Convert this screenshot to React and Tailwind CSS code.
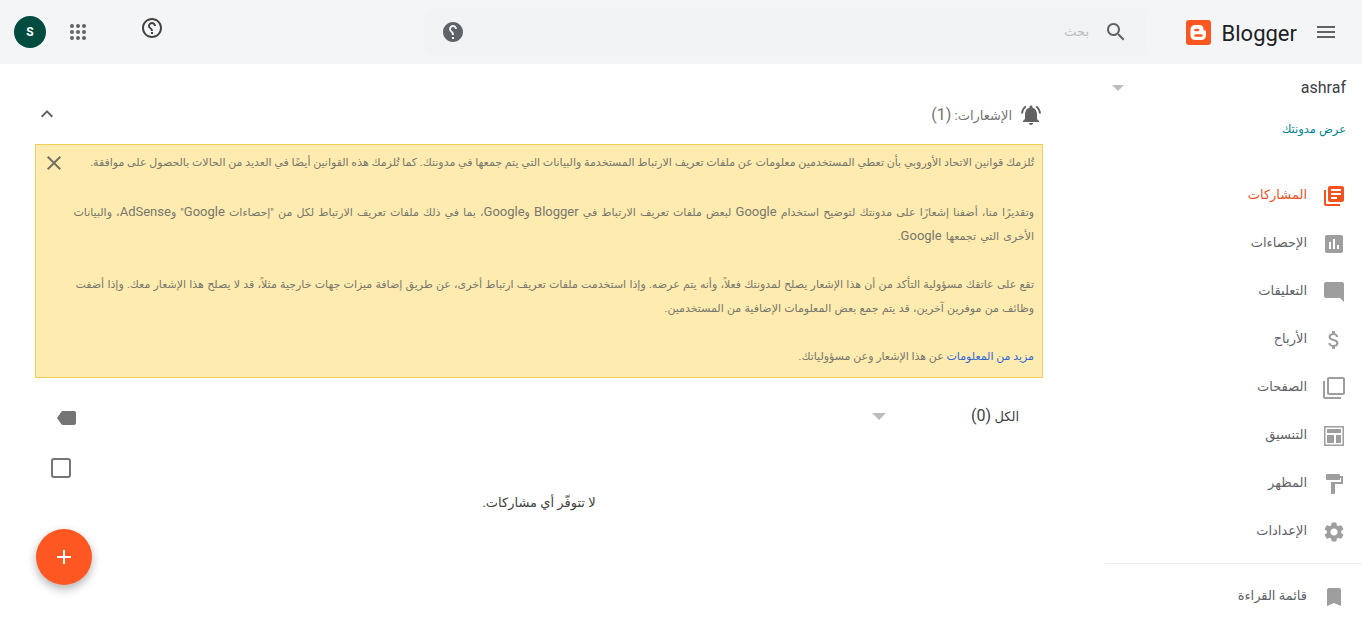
import React from 'react';

const MaterialIcon = ({ d, className = '' }) => (
  <svg viewBox="0 0 24 24" className={className} fill="currentColor">
    <path d={d} />
  </svg>
);

const icons = {
  posts: 'M4 6H2v14c0 1.1.9 2 2 2h14v-2H4V6zm16-4H8c-1.1 0-2 .9-2 2v12c0 1.1.9 2 2 2h12c1.1 0 2-.9 2-2V4c0-1.1-.9-2-2-2zm-1 9H9V9h10v2zm-4 4H9v-2h6v2zm4-8H9V5h10v2z',
  stats: 'M19 3H5c-1.1 0-2 .9-2 2v14c0 1.1.9 2 2 2h14c1.1 0 2-.9 2-2V5c0-1.1-.9-2-2-2zM9 17H7v-7h2v7zm4 0h-2V7h2v10zm4 0h-2v-4h2v4z',
  comments: 'M21.99 4c0-1.1-.89-2-1.99-2H4c-1.1 0-2 .9-2 2v12c0 1.1.9 2 2 2h14l4 4-.01-18z',
  earnings: 'M11.8 10.9c-2.27-.59-3-1.2-3-2.15 0-1.09 1.01-1.85 2.7-1.85 1.78 0 2.44.85 2.5 2.1h2.21c-.07-1.72-1.12-3.3-3.21-3.81V3h-3v2.16c-1.94.42-3.5 1.68-3.5 3.61 0 2.31 1.91 3.46 4.7 4.13 2.5.6 3 1.48 3 2.41 0 .69-.49 1.79-2.7 1.79-2.06 0-2.87-.92-2.98-2.1h-2.2c.12 2.19 1.76 3.42 3.68 3.83V21h3v-2.15c1.95-.37 3.5-1.5 3.5-3.55 0-2.84-2.43-3.81-4.7-4.4z',
  pages: 'M3 5H1v16c0 1.1.9 2 2 2h16v-2H3V5zm18-4H7c-1.1 0-2 .9-2 2v14c0 1.1.9 2 2 2h14c1.1 0 2-.9 2-2V3c0-1.1-.9-2-2-2zm0 16H7V3h14v14z',
  layout: 'M2 2v20h20V2H2zm18.500 18.500h-17v-17h17v17zM5 5h14v4H5V5zm0 6h7v8H5v-8zm9 0h5v8h-5v-8z',
  theme: 'M18 4V3c0-.55-.45-1-1-1H5c-.55 0-1 .45-1 1v4c0 .55.45 1 1 1h12c.55 0 1-.45 1-1V6h1v4H9v11c0 .55.45 1 1 1h2c.55 0 1-.45 1-1v-9h8V4h-3z',
  settings: 'M19.14 12.94c.04-.3.06-.61.06-.94 0-.32-.02-.64-.07-.94l2.03-1.58c.18-.14.23-.41.12-.61l-1.92-3.32c-.12-.22-.37-.29-.59-.22l-2.39.96c-.5-.38-1.03-.7-1.62-.94l-.36-2.54c-.04-.24-.24-.41-.48-.41h-3.84c-.24 0-.43.17-.47.41l-.36 2.54c-.59.24-1.13.57-1.62.94l-2.39-.96c-.22-.08-.47 0-.59.22L2.74 8.87c-.12.21-.08.47.12.61l2.03 1.58c-.05.3-.09.63-.09.94s.02.64.07.94l-2.03 1.58c-.18.14-.23.41-.12.61l1.92 3.32c.12.22.37.29.59.22l2.39-.96c.5.38 1.03.7 1.62.94l.36 2.54c.05.24.24.41.48.41h3.84c.24 0 .44-.17.47-.41l.36-2.54c.59-.24 1.13-.56 1.62-.94l2.39.96c.22.08.47 0 .59-.22l1.92-3.32c.12-.22.07-.47-.12-.61l-2.01-1.58zM12 15.6c-1.98 0-3.6-1.62-3.6-3.6s1.62-3.6 3.6-3.6 3.6 1.62 3.6 3.6-1.62 3.6-3.6 3.6z',
  bookmark: 'M17 3H7c-1.1 0-1.99.9-1.99 2L5 21l7-3 7 3V5c0-1.1-.9-2-2-2z',
  bell: 'M7.58 4.08L6.15 2.65C3.75 4.48 2.17 7.3 2.03 10.5h2c.15-2.65 1.51-4.97 3.55-6.42zm12.39 6.42h2c-.15-3.2-1.73-6.02-4.12-7.85l-1.42 1.43c2.02 1.45 3.39 3.77 3.54 6.42zM18 11c0-3.07-1.64-5.64-4.5-6.32V4c0-.83-.67-1.5-1.5-1.5s-1.5.67-1.5 1.5v.68C7.63 5.36 6 7.92 6 11v5l-2 2v1h16v-1l-2-2v-5zm-6 11c.14 0 .27-.01.4-.04.65-.14 1.18-.58 1.44-1.18.1-.24.15-.5.15-.78h-4c.01 1.1.9 2 2.01 2z',
  label: 'M17.63 5.84C17.27 5.33 16.67 5 16 5L5 5.01C3.9 5.01 3 5.9 3 7v10c0 1.1.9 1.99 2 1.99L16 19c.67 0 1.27-.33 1.63-.84L22 12l-4.37-6.16z',
  helpOutline: 'M11 18h2v-2h-2v2zm1-16C6.48 2 2 6.48 2 12s4.48 10 10 10 10-4.48 10-10S17.52 2 12 2zm0 18c-4.41 0-8-3.59-8-8s3.59-8 8-8 8 3.59 8 8-3.59 8-8 8zm0-14c-2.21 0-4 1.79-4 4h2c0-1.1.9-2 2-2s2 .9 2 2c0 2-3 1.75-3 5h2c0-2.25 3-2.5 3-5 0-2.21-1.79-4-4-4z',
  helpFilled: 'M12 2C6.48 2 2 6.48 2 12s4.48 10 10 10 10-4.48 10-10S17.52 2 12 2zm1 17h-2v-2h2v2zm2.07-7.75l-.9.92C13.45 12.9 13 13.5 13 15h-2v-.5c0-1.1.45-2.1 1.17-2.83l1.24-1.26c.37-.36.59-.86.59-1.41 0-1.1-.9-2-2-2s-2 .9-2 2H8c0-2.21 1.79-4 4-4s4 1.79 4 4c0 .88-.36 1.68-.93 2.25z',
  search: 'M15.5 14h-.79l-.28-.27C15.41 12.59 16 11.11 16 9.5 16 5.91 13.09 3 9.5 3S3 5.91 3 9.5 5.91 16 9.5 16c1.61 0 3.09-.59 4.23-1.57l.27.28v.79l5 4.99L20.49 19l-4.99-5zm-6 0C7.01 14 5 11.99 5 9.5S7.01 5 9.5 5 14 7.01 14 9.5 11.99 14 9.5 14z',
  menu: 'M3 18h18v-2H3v2zm0-5h18v-2H3v2zm0-7v2h18V6H3z',
  close: 'M19 6.41L17.59 5 12 10.59 6.41 5 5 6.41 10.59 12 5 17.59 6.41 19 12 13.41 17.59 19 19 17.59 13.41 12z',
  chevronUp: 'M7.41 15.41L12 10.83l4.59 4.58L18 14l-6-6-6 6z',
  plus: 'M19 13h-6v6h-2v-6H5v-2h6V5h2v6h6v2z',
};

const navItems = [
  { label: 'المشاركات', icon: 'posts', active: true },
  { label: 'الإحصاءات', icon: 'stats' },
  { label: 'التعليقات', icon: 'comments' },
  { label: 'الأرباح', icon: 'earnings' },
  { label: 'الصفحات', icon: 'pages' },
  { label: 'التنسيق', icon: 'layout' },
  { label: 'المظهر', icon: 'theme' },
  { label: 'الإعدادات', icon: 'settings' },
];

// Latin words in the notice sit a little larger than the Arabic around them
const Latin = ({ children }) => <span className="text-[13px] leading-none">{children}</span>;

function NavRow({ item }) {
  return (
    <div className={`flex h-12 items-center gap-[15px] pr-4 text-[13px] ${item.active ? 'text-[#f4511e]' : 'text-[#5f6368]'}`}>
      <MaterialIcon d={icons[item.icon]} className={`h-6 w-6 ${item.active ? 'text-[#f4511e]' : 'text-[#9e9e9e]'}`} />
      <span className="-mt-[3px]">{item.label}</span>
    </div>
  );
}

function BloggerLogo() {
  return (
    <svg viewBox="0 0 25 25" className="h-[25px] w-[25px]">
      <rect width="25" height="25" rx="3" fill="#ff5722" />
      <path
        fillRule="evenodd"
        fill="#fff"
        d="M9 5h4.500c2.500 0 4 1.500 4 3.800v.7c0 .6.400 1 1 1h.300c.700 0 1.200.500 1.200 1.200v3.800c0 2.500-2 4.500-4.500 4.500H9c-2.500 0-4.500-2-4.500-4.500V9.500C4.500 7 6.500 5 9 5zm.500 3.700a1.300 1.300 0 0 0 0 2.600h2.500a1.300 1.300 0 0 0 0-2.600H9.500zm0 5.500a1.300 1.300 0 0 0 0 2.600h6a1.300 1.300 0 0 0 0-2.600h-6z"
      />
    </svg>
  );
}

function TopBar() {
  return (
    <header className="flex h-16 shrink-0 items-center bg-[#f4f5f6]">
      <div className="flex w-[215px] shrink-0 items-center pr-6">
        <MaterialIcon d={icons.menu} className="h-6 w-6 text-[#5f6368]" />
        <span dir="ltr" className="mt-1 mr-[17px] text-[22px] leading-none text-[#202124]">Blogger</span>
        <div className="mr-[11px] flex"><BloggerLogo /></div>
      </div>
      <div className="flex h-12 w-[723px] shrink-0 items-center rounded-lg bg-[#f1f3f4] pr-[19px] pl-[17px]">
        <MaterialIcon d={icons.search} className="h-6 w-6 text-[#5f6368]" />
        <span className="mr-[15px] text-[13px] text-[#bdbdbd]">بحث</span>
        <MaterialIcon d={icons.helpFilled} className="mr-auto h-6 w-6 -scale-x-100 text-[#5f6368]" />
      </div>
      <div dir="ltr" className="flex flex-1 items-center pl-[14px]">
        <div className="flex h-8 w-8 items-center justify-center rounded-full bg-[#004d40] text-[12px] font-bold text-white">S</div>
        <div className="ml-6 grid w-4 grid-cols-3 gap-[2px]">
          {Array.from({ length: 9 }).map((_, i) => (
            <span key={i} className="h-1 w-1 rounded-full bg-[#5f6368]" />
          ))}
        </div>
        <MaterialIcon d={icons.helpOutline} className="relative -top-1 ml-[54px] h-6 w-6 -scale-x-100 text-[#424242]" />
      </div>
    </header>
  );
}

function Sidebar() {
  return (
    <aside className="w-[257px] shrink-0">
      <div className="flex h-12 items-center justify-between pr-4 pl-[7px]">
        <span dir="ltr" className="text-[16px] text-[#3c4043]">ashraf</span>
        <span className="h-0 w-0 border-x-[6px] border-t-[6px] border-x-transparent border-t-[#bdbdbd]" />
      </div>
      <div className="mt-[5px] pr-4 text-[11.5px] leading-6 text-[#00838f]">عرض مدونتك</div>
      <nav className="mt-[31px]">
        {navItems.map((item) => (
          <NavRow key={item.icon} item={item} />
        ))}
      </nav>
      <div className="mt-[7px] border-t border-[#eeeeee]" />
      <div className="mt-[9px]">
        <NavRow item={{ label: 'قائمة القراءة', icon: 'bookmark' }} />
      </div>
    </aside>
  );
}

function CookieNotice() {
  return (
    <div className="relative border border-[#f4cf55] bg-[#feebb0] pt-[6px] pr-2 pb-[8px] pl-[34px] text-[11px] leading-6 text-[#77776c]">
      <MaterialIcon d={icons.close} className="absolute top-[6px] left-[6px] h-6 w-6 text-[#757160]" />
      <p>تُلزمك قوانين الاتحاد الأوروبي بأن تعطي المستخدمين معلومات عن ملفات تعريف الارتباط المستخدمة والبيانات التي يتم جمعها في مدونتك. كما تُلزمك هذه القوانين أيضًا في العديد من الحالات بالحصول على موافقة.</p>
      <p className="mt-[26px] [word-spacing:1.4px]">وتقديرًا منا، أضفنا إشعارًا على مدونتك لتوضيح استخدام <Latin>Google</Latin> لبعض ملفات تعريف الارتباط في <Latin>Blogger</Latin> و<Latin>Google</Latin>، بما في ذلك ملفات تعريف الارتباط لكل من "إحصاءات <Latin>Google</Latin>" و<Latin>AdSense</Latin>، والبيانات الأخرى التي تجمعها <Latin>Google</Latin>.</p>
      <p className="mt-6 [word-spacing:0.5px]">تقع على عاتقك مسؤولية التأكد من أن هذا الإشعار يصلح لمدونتك فعلاً، وأنه يتم عرضه. وإذا استخدمت ملفات تعريف ارتباط أخرى، عن طريق إضافة ميزات جهات خارجية مثلاً، قد لا يصلح هذا الإشعار معك. وإذا أضفت وظائف من موفرين آخرين، قد يتم جمع بعض المعلومات الإضافية من المستخدمين.</p>
      <p className="mt-6"><a className="text-[#3367d6]">مزيد من المعلومات</a> عن هذا الإشعار وعن مسؤولياتك.</p>
    </div>
  );
}

function PostsPanel() {
  return (
    <main className="relative flex-1 pt-[36px] pr-[62px] pl-[35px]">
      <div className="flex h-[30px] items-center">
        <MaterialIcon d={icons.bell} className="h-6 w-6 text-[#616161]" />
        <span className="mr-[7px] text-[13px] text-[#757575]">الإشعارات: <span className="text-[16px]">(1)</span></span>
        <MaterialIcon d={icons.chevronUp} className="mr-auto h-6 w-6 -translate-y-px text-[#5f6368]" />
      </div>
      <div className="mt-[14px]"><CookieNotice /></div>
      <div className="mt-[24px] flex h-[28px] items-center pr-6 pl-[20px]">
        <span className="text-[13px] text-[#3c4043]">الكل <span className="text-[16px]">(0)</span></span>
        <span className="mr-[85px] h-0 w-0 border-x-[7px] border-t-[7px] border-x-transparent border-t-[#bdbdbd]" />
        <MaterialIcon d={icons.label} className="mt-1 mr-auto h-6 w-6 -scale-x-100 text-[#757575]" />
      </div>
      <div className="mt-[28px] flex justify-end pl-4">
        <span className="h-5 w-5 rounded-[3px] border-2 border-[#757575]" />
      </div>
      <p className="mt-[15px] text-center text-[13px] text-[#424242]">لا تتوفّر أي مشاركات.</p>
      <button className="absolute top-[465px] left-[36px] flex h-14 w-14 items-center justify-center rounded-full bg-[#ff5722] text-white shadow-[0_4px_10px_rgba(0,0,0,0.3)]">
        <MaterialIcon d={icons.plus} className="h-6 w-6" />
      </button>
    </main>
  );
}

export default function App() {
  return (
    <div dir="rtl" className="flex h-screen flex-col overflow-hidden bg-white font-['Roboto','DejaVu_Sans',sans-serif]">
      <TopBar />
      <div className="flex flex-1">
        <Sidebar />
        <PostsPanel />
      </div>
    </div>
  );
}
